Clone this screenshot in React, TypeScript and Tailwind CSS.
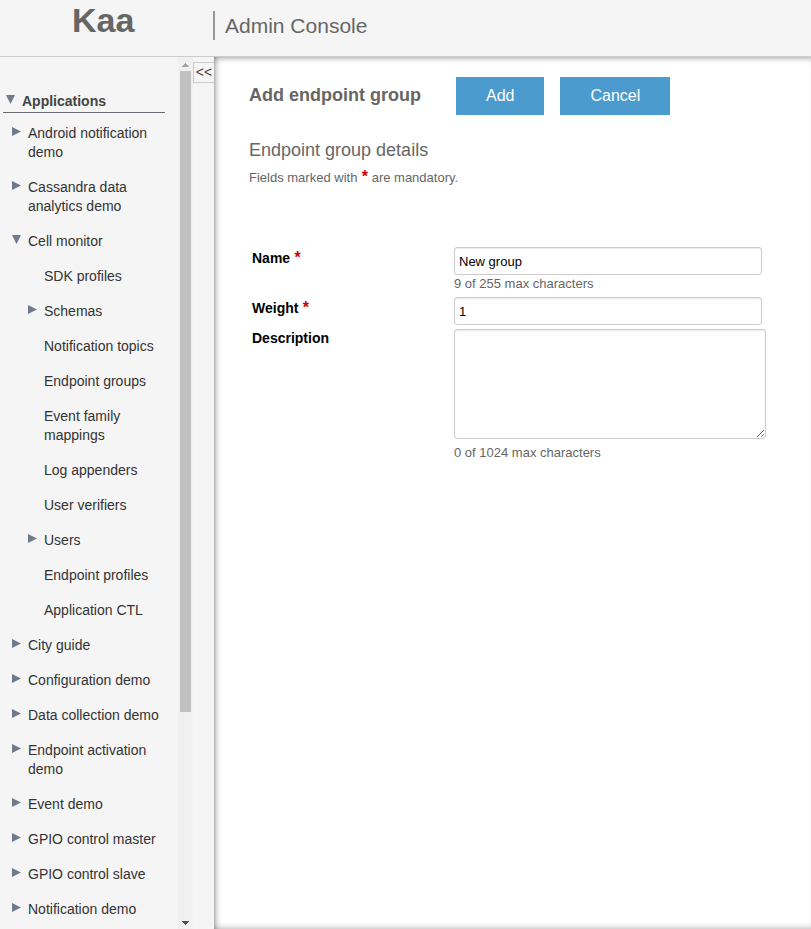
import React, { useState } from "react";

type NavItem = { label: string; level: 1 | 2; state?: "open" | "closed" };

const items: NavItem[] = [
  { label: "Android notification demo", level: 1, state: "closed" },
  { label: "Cassandra data analytics demo", level: 1, state: "closed" },
  { label: "Cell monitor", level: 1, state: "open" },
  { label: "SDK profiles", level: 2 },
  { label: "Schemas", level: 2, state: "closed" },
  { label: "Notification topics", level: 2 },
  { label: "Endpoint groups", level: 2 },
  { label: "Event family mappings", level: 2 },
  { label: "Log appenders", level: 2 },
  { label: "User verifiers", level: 2 },
  { label: "Users", level: 2, state: "closed" },
  { label: "Endpoint profiles", level: 2 },
  { label: "Application CTL", level: 2 },
  { label: "City guide", level: 1, state: "closed" },
  { label: "Configuration demo", level: 1, state: "closed" },
  { label: "Data collection demo", level: 1, state: "closed" },
  { label: "Endpoint activation demo", level: 1, state: "closed" },
  { label: "Event demo", level: 1, state: "closed" },
  { label: "GPIO control master", level: 1, state: "closed" },
  { label: "GPIO control slave", level: 1, state: "closed" },
  { label: "Notification demo", level: 1, state: "closed" },
];

function Arrow({ state }: { state?: "open" | "closed" }) {
  return (
    <svg className="mt-[3px] h-[9px] w-[9px] shrink-0 fill-[#6f7a8a]" viewBox="0 0 9 9" aria-hidden="true">
      {state === "open" && <path d="M0 0h9L4.5 9z" />}
      {state === "closed" && <path d="M0 0l9 4.5L0 9z" />}
    </svg>
  );
}

function Sidebar() {
  return (
    <nav className="w-[178px] shrink-0 overflow-hidden pr-[13px] pl-[3px] text-sm leading-[19px] text-[#333]">
      <a href="#applications" className="mt-[35px] flex gap-[7px] border-b border-[#666a73] pb-[1px] pl-[3px] font-bold text-[#444]">
        <Arrow state="open" />
        Applications
      </a>
      <ul className="pt-[3px]">
        {items.map((item) => (
          <li key={item.label}>
            <a href="#item" className={item.level === 1 ? "flex gap-[7px] py-2 pl-[9px]" : "flex gap-[7px] py-2 pl-[25px]"}>
              <Arrow state={item.state} />
              <span>{item.label}</span>
            </a>
          </li>
        ))}
      </ul>
    </nav>
  );
}

function ScrollTrack() {
  return (
    <div className="flex w-[15px] shrink-0 flex-col items-center bg-[#f0f0f0]" aria-hidden="true">
      <svg className="h-[14px] w-[7px] shrink-0 fill-[#a3a3a3]" viewBox="0 0 7 14" shapeRendering="crispEdges">
        <path d="M3 6h1v1h1v1h1v1h1v1H0V9h1V8h1V7h1z" />
      </svg>
      <div className="flex min-h-0 w-full flex-1 flex-col px-[2px]">
        <div className="h-[76%] bg-[#c1c1c1]" />
      </div>
      <svg className="h-[14px] w-[7px] shrink-0 fill-[#505050]" viewBox="0 0 7 14" shapeRendering="crispEdges">
        <path d="M0 6h7v1H6v1H5v1H4v1H3V9H2V8H1V7H0z" />
      </svg>
    </div>
  );
}

function Star() {
  return <span className="text-base leading-none font-bold text-[#d00000]"> *</span>;
}

const fieldClass =
  "block rounded-[3px] border border-[#ccc] bg-white px-1 text-[13px] text-black shadow-[inset_0_1px_1px_rgba(0,0,0,0.08)] outline-none";

export default function App() {
  const [name, setName] = useState("New group");
  const [weight, setWeight] = useState("1");
  const [description, setDescription] = useState("");

  return (
    <div className="flex h-screen flex-col overflow-hidden bg-[#f5f5f5] font-['Liberation_Sans',Arial,sans-serif] text-[#666]">
      <header className="flex h-[57px] shrink-0 border-b border-[#ccc]">
        <div className="w-[213px] pl-[72px] text-[34px] leading-10 font-bold">Kaa</div>
        <div className="mt-[11px] h-[29px] border-l-2 border-[#999] pl-[10px] text-[21px] leading-[29px]">Admin Console</div>
      </header>
      <div className="flex min-h-0 flex-1">
        <Sidebar />
        <ScrollTrack />
        <button className="mt-[5px] h-[21px] w-[21px] shrink-0 border border-r-0 border-[#ccc] text-sm leading-[19px] text-[#444]" aria-label="Collapse menu">
          &lt;&lt;
        </button>
        <main className="min-w-0 flex-1 bg-white pt-5 pr-11 pl-[35px] shadow-[inset_6px_0_6px_-5px_rgba(0,0,0,0.45),inset_0_6px_6px_-5px_rgba(0,0,0,0.35),inset_0_-6px_6px_-5px_rgba(0,0,0,0.25)]">
          <div className="flex items-center gap-4">
            <h1 className="w-[191px] pb-[2px] text-lg font-bold">Add endpoint group</h1>
            <button className="h-[38px] bg-[#4b9bce] px-[30px] text-base text-white">Add</button>
            <button className="h-[38px] bg-[#4b9bce] px-[30px] text-base text-white">Cancel</button>
          </div>
          <h2 className="mt-5 text-lg leading-[30px]">Endpoint group details</h2>
          <p className="text-[13px] leading-[26px]">
            Fields marked with
            <Star /> are mandatory.
          </p>
          <form className="mt-14 grid grid-cols-[202px_minmax(0,312px)] gap-y-1 pl-[3px] text-[13px] leading-[18px]">
            <label htmlFor="name" className="text-sm leading-[22px] font-bold text-black">
              Name
              <Star />
            </label>
            <div className="pr-1">
              <input id="name" className={`${fieldClass} h-7 w-full`} value={name} onChange={(e) => setName(e.target.value)} />
              <div>{name.length} of 255 max characters</div>
            </div>
            <label htmlFor="weight" className="text-sm leading-[22px] font-bold text-black">
              Weight
              <Star />
            </label>
            <div className="pr-1">
              <input id="weight" className={`${fieldClass} h-7 w-full`} value={weight} onChange={(e) => setWeight(e.target.value)} />
            </div>
            <label htmlFor="description" className="text-sm leading-[18px] font-bold text-black">
              Description
            </label>
            <div>
              <textarea
                id="description"
                className={`${fieldClass} h-[110px] w-full resize`}
                value={description}
                onChange={(e) => setDescription(e.target.value)}
              />
              <div className="pt-[5px]">{description.length} of 1024 max characters</div>
            </div>
          </form>
        </main>
      </div>
    </div>
  );
}
